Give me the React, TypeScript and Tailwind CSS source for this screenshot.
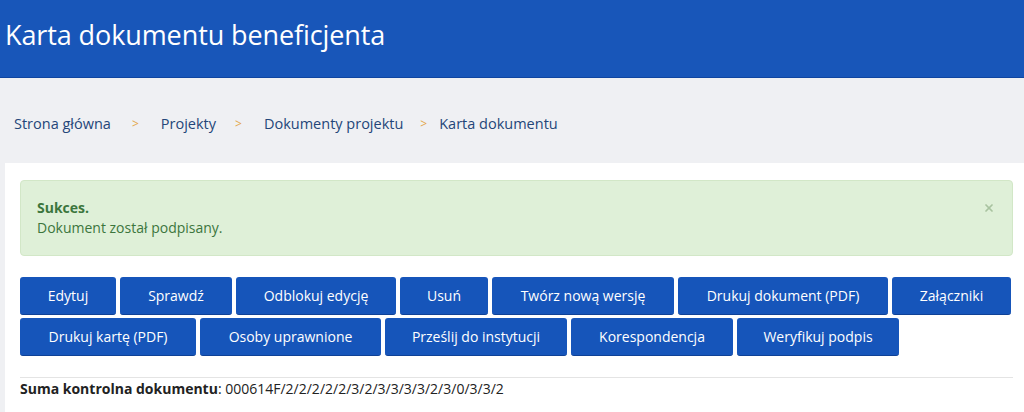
import { X } from 'lucide-react'

const row1 = [
  { label: 'Edytuj', w: 'w-[96px]' },
  { label: 'Sprawdź', w: 'w-[112px]' },
  { label: 'Odblokuj edycję', w: 'w-[160px]' },
  { label: 'Usuń', w: 'w-[88px]' },
  { label: 'Twórz nową wersję', w: 'w-[182px]' },
  { label: 'Drukuj dokument (PDF)', w: 'w-[210px]' },
  { label: 'Załączniki', w: 'w-[119px]' },
]

const row2 = [
  { label: 'Drukuj kartę (PDF)', w: 'w-[176px]' },
  { label: 'Osoby uprawnione', w: 'w-[181px]' },
  { label: 'Prześlij do instytucji', w: 'w-[182px]' },
  { label: 'Korespondencja', w: 'w-[162px]' },
  { label: 'Weryfikuj podpis', w: 'w-[162px]' },
]

// separator spacing differs slightly between crumbs in the original
const crumbs = [
  { label: 'Strona główna', sep: '' },
  { label: 'Projekty', sep: 'ml-[21px] mr-[22px]' },
  { label: 'Dokumenty projektu', sep: 'ml-[19px] mr-[22px]' },
  { label: 'Karta dokumentu', sep: 'ml-[17px] mr-[12px]' },
]

function ActionButton({ label, w }: { label: string; w: string }) {
  return (
    <button
      className={`${w} shrink-0 h-[38px] rounded-[3px] bg-[#1655ba] text-[14px] text-white text-center border-b border-[#0f4196]`}
    >
      {label}
    </button>
  )
}

export default function App() {
  return (
    <div className="w-[1024px] h-[412px] overflow-hidden bg-[#eff0f3] font-['Open_Sans',sans-serif]">
      <header className="h-[78px] bg-[#1856b9] border-b border-[#0f45a0] flex items-center px-[5px]">
        <h1 className="text-[27px] text-white tracking-[-0.1px] leading-none mt-[-8px]">
          Karta dokumentu beneficjenta
        </h1>
      </header>

      <nav className="h-[85px] flex items-center pl-[14px] pt-[6px] text-[14.5px] text-[#244679]">
        {crumbs.map((c) => (
          <span key={c.label} className="flex items-center">
            {c.sep && <span className={`text-[#e3a64a] text-[12px] ${c.sep}`}>&gt;</span>}
            {c.label}
          </span>
        ))}
      </nav>

      <main className="ml-[5px] bg-white h-full pl-[15px] pr-[11px] pt-[17px]">
        <div className="relative rounded-[4px] bg-[#dff0d8] border border-[#d2e7c7] text-[#3c763d] text-[14px] px-[16px] pt-[17px] pb-[17px] leading-[20px]">
          <div className="font-bold">Sukces.</div>
          <div>Dokument został podpisany.</div>
          <X className="absolute right-[17px] top-[21px] w-[12px] h-[12px] text-[#a9c3a0]" strokeWidth={3.5} />
        </div>

        <div className="mt-[21px] flex flex-col gap-[3px]">
          <div className="flex gap-[4px]">
            {row1.map((b) => (
              <ActionButton key={b.label} {...b} />
            ))}
          </div>
          <div className="flex gap-[4px]">
            {row2.map((b) => (
              <ActionButton key={b.label} {...b} />
            ))}
          </div>
        </div>

        <div className="mt-[21px] border-t border-[#e4e4e4] pt-[1px] leading-[20px] text-[14px] text-[#222]">
          <span className="font-bold">Suma kontrolna dokumentu</span>: 000614F/2/2/2/2/2/3/2/3/3/3/3/2/3/0/3/3/2
        </div>
      </main>
    </div>
  )
}
